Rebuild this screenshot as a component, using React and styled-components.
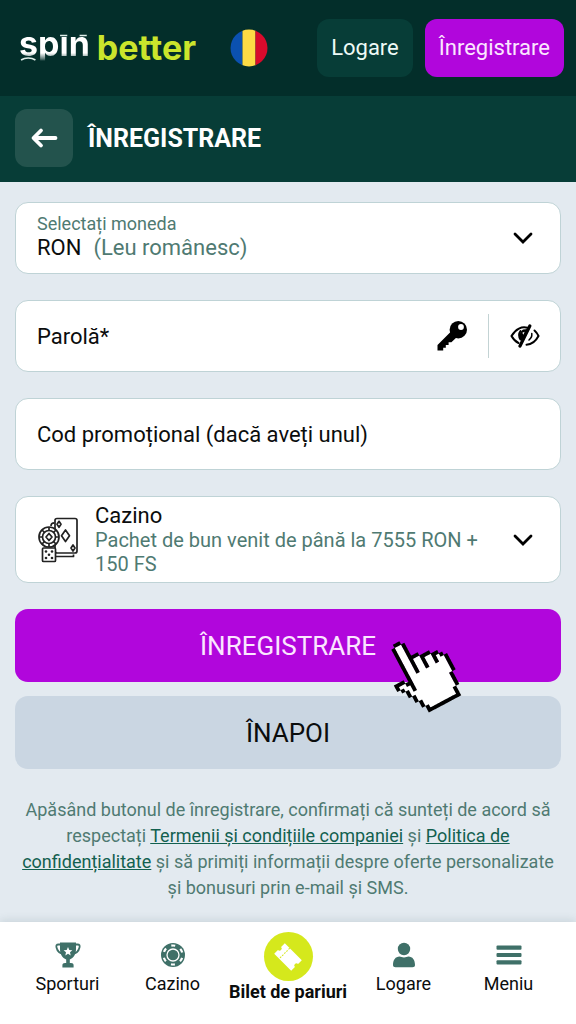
import React, { useState } from "react";
import styled, { createGlobalStyle } from "styled-components";

const GlobalStyle = createGlobalStyle`
  * {
    box-sizing: border-box;
  }
  body {
    margin: 0;
    background: #e3eaf0;
    font-family: Roboto, "Liberation Sans", sans-serif;
    color: #0b0d0d;
  }
  button,
  input,
  select {
    font-family: inherit;
  }
`;

const Page = styled.div`
  display: flex;
  flex-direction: column;
  min-height: 100vh;
`;

const Header = styled.header`
  display: flex;
  align-items: center;
  height: 96px;
  padding: 0 12px 1px 19px;
  background: #032e2a;
`;

const Logo = styled.a`
  display: flex;
  align-items: center;
  gap: 7px;
  font-family: Inter, sans-serif;
  font-size: 34px;
  font-weight: 700;
  line-height: 40px;
  text-decoration: none;
`;

const LogoSpin = styled.span`
  position: relative;
  padding-bottom: 8px;
  color: transparent;
  background: linear-gradient(
    #fff 0 29px,
    rgba(255, 255, 255, 0.35) 35px,
    transparent 37px
  );
  background-clip: text;
`;

const LogoSlices = styled.svg`
  position: absolute;
  top: 0;
  left: 0;
  width: 100%;
  height: 40px;
`;

const LogoBetter = styled.span`
  color: #cbe52c;
`;

const LanguageButton = styled.button`
  display: flex;
  margin-left: 34px;
  padding: 0;
  border: 0;
  background: none;
`;

const HeaderActions = styled.div`
  display: flex;
  gap: 12px;
  margin-left: auto;
`;

const HeaderButton = styled.button`
  height: 58px;
  padding: 0 14px;
  border: 0;
  border-radius: 12px;
  background: ${(props) => (props.$accent ? "#b106dc" : "#073d37")};
  color: ${(props) => (props.$accent ? "#fbe6ff" : "#eefaf6")};
  font-size: 22px;
`;

const TitleBar = styled.div`
  display: flex;
  align-items: center;
  gap: 15px;
  height: 86px;
  padding: 0 15px 2px;
  background: #073d37;
`;

const BackButton = styled.button`
  display: flex;
  align-items: center;
  justify-content: center;
  width: 58px;
  height: 58px;
  padding: 0;
  border: 0;
  border-radius: 12px;
  background: #23534d;
`;

const Title = styled.h1`
  margin: 0;
  color: #fff;
  font-size: 25px;
  font-weight: 700;
`;

const Form = styled.form`
  display: flex;
  flex-direction: column;
  gap: 26px;
  padding: 20px 15px 0;
`;

const Field = styled.div`
  position: relative;
  display: flex;
  align-items: center;
  min-height: 72px;
  padding: 0 20px 0 21px;
  border: 1px solid #bfd3d6;
  border-radius: 13px;
  background: #fff;
`;

const BonusField = styled(Field)`
  min-height: 87px;
  gap: 16px;
`;

const FieldBody = styled.div`
  display: flex;
  flex: 1;
  flex-direction: column;
`;

const FieldLabel = styled.label`
  color: #4f7a72;
  font-size: 18px;
  line-height: 24px;
`;

const FieldValue = styled.span`
  color: #0b0d0d;
  font-size: 22px;
  line-height: 24px;
`;

const CurrencyName = styled(FieldValue)`
  color: #4f7a72;
`;

const BonusText = styled.span`
  color: #4f7a72;
  font-size: 20px;
  line-height: 24px;
`;

const CurrencyValue = styled.div`
  display: flex;
  gap: 12px;
  padding-bottom: 5px;
`;

// the native control covers the whole card, the card shows its value
const NativeSelect = styled.select`
  position: absolute;
  inset: 0;
  width: 100%;
  height: 100%;
  opacity: 0;
  font-size: 22px;
`;

const TextInput = styled.input`
  flex: 1;
  min-width: 0;
  height: 70px;
  padding: 0;
  border: 0;
  outline: 0;
  background: none;
  color: #0b0d0d;
  font-size: 22px;

  &::placeholder {
    color: #0b0d0d;
    opacity: 1;
  }
`;

const IconButton = styled.button`
  display: flex;
  padding: 0;
  border: 0;
  background: none;
  color: #000;
`;

const Divider = styled.span`
  width: 1px;
  height: 44px;
  margin: 0 21px;
  background: #c3d3d4;
`;

const ChevronWrap = styled.span`
  display: flex;
  margin-right: 6px;
`;

const Actions = styled.div`
  display: flex;
  flex-direction: column;
  gap: 14px;
`;

const SubmitButton = styled.button`
  position: relative;
  z-index: ${(props) => (props.$primary ? 1 : 0)};
  height: 73px;
  border: 0;
  border-radius: 13px;
  background: ${(props) => (props.$primary ? "#b106dc" : "#cad6e2")};
  color: ${(props) => (props.$primary ? "#fbe6ff" : "#0b0d0d")};
  font-size: 26px;
`;

const Hand = styled.svg`
  position: absolute;
  top: 32px;
  left: calc(50% + 102px);
  width: 76px;
  height: 80px;
`;

const Terms = styled.p`
  margin: 28px 15px 21px;
  color: #4f7a72;
  font-size: 18px;
  line-height: 26px;
  text-align: center;

  a {
    color: #12604f;
  }
`;

const BottomNav = styled.nav`
  display: flex;
  justify-content: space-between;
  flex: 1;
  padding: 10px 15px 0;
  background: #fff;
  box-shadow: 0 -2px 8px rgba(60, 90, 100, 0.14);
`;

const NavItem = styled.a`
  display: flex;
  flex: ${(props) => (props.$active ? "0 0 126px" : "1")};
  flex-direction: column;
  align-items: center;
  gap: ${(props) => (props.$active ? "0" : "5px")};
  padding-top: ${(props) => (props.$active ? "0" : "10px")};
  color: #0b0d0d;
  font-size: 18px;
  font-weight: ${(props) => (props.$active ? 700 : 400)};
  line-height: 22px;
  text-decoration: none;
  white-space: nowrap;
`;

const TicketBadge = styled.span`
  display: flex;
  align-items: center;
  justify-content: center;
  width: 49px;
  height: 49px;
  border-radius: 50%;
  background: #d5e81c;
`;

const Flag = () => (
  <svg width="38" height="38" viewBox="0 0 38 38" aria-hidden="true">
    <clipPath id="flag">
      <circle cx="19" cy="19" r="18.5" />
    </clipPath>
    <g clipPath="url(#flag)">
      <rect width="12.5" height="38" fill="#0b51b0" />
      <rect x="12.5" width="13" height="38" fill="#fddb45" />
      <rect x="25.5" width="12.5" height="38" fill="#d90a2c" />
    </g>
  </svg>
);

const ArrowLeft = () => (
  <svg width="28" height="22" viewBox="0 0 28 22" aria-hidden="true">
    <path
      d="M11 3.5 3.5 11l7.500 7.500M4 11h21.500"
      fill="none"
      stroke="#fff"
      strokeWidth="3.8"
      strokeLinecap="round"
      strokeLinejoin="round"
    />
  </svg>
);

const Chevron = () => (
  <ChevronWrap>
    <svg width="22" height="14" viewBox="0 0 22 14" aria-hidden="true">
      <path
        d="M3 3l8 8 8-8"
        fill="none"
        stroke="#000"
        strokeWidth="2.800"
        strokeLinecap="round"
      />
    </svg>
  </ChevronWrap>
);

const KeyIcon = () => (
  <svg width="30" height="30" viewBox="0 0 30 30" aria-hidden="true">
    <circle cx="21.300" cy="8.700" r="8.700" />
    <path d="M14 10.500.5 24v5.500h5.700v-2.800h2.600V24h2.800v-2.700h2.800l5.600-5.300z" />
    <circle cx="24" cy="6" r="2.900" fill="#fff" />
  </svg>
);

const EyeOff = () => (
  <svg width="30" height="24" viewBox="0 0 30 24" aria-hidden="true">
    <g fill="none" stroke="#000" strokeWidth="2" strokeLinecap="round">
      <path d="M17.500 3.800C12 2 5.500 4.800 1.500 12c2 3.600 4.500 5.800 7 7" />
      <path d="M24.500 6.500c1.700 1.500 3 3.300 4 5.500-3 5.700-7.300 8.500-12 8.800" />
      <path d="M10.500 7c-1.800 2.500-1.600 5.800 0 8.500" />
      <path d="M21.800 9.500c.3 2.500-1 5-2.800 6.500" strokeWidth="1.500" />
    </g>
    <path d="M13 5.500 18 5l-6.500 11.500C8.500 13 9 8.500 13 5.500z" />
    <path d="M19.800 2 10 22" stroke="#000" strokeWidth="3.200" strokeLinecap="round" />
    <path d="m12.300 8.700 2.300-1-1.200 3z" fill="#fff" />
  </svg>
);

const CasinoIcon = () => (
  <svg width="42" height="46" viewBox="0 0 42 46" aria-hidden="true">
    <g fill="none" stroke="#222" strokeWidth="1.700" strokeLinejoin="round">
      <path d="M14 9c0-2 1-3.200 3.500-3.200M19 39.500h17.500v-2" />
      <rect x="18" y="1.500" width="22" height="34.500" rx="2" />
      <path d="m22 4.300 2 3-2 3-2-3zM36 28l2 3-2 3-2-3zM28.500 13l4 5.800-4 5.800-4-5.800z" />
      <circle cx="12" cy="20" r="10" fill="#fff" />
      <circle cx="12" cy="20" r="6.500" />
      <path d="m12 16.500 3 3.500-3 3.500L9 20z" />
      <path d="M12 10v3.500M12 26.500V30M2 20h3.500M18.500 20H22M5 13l2.400 2.400M16.600 24.600 19 27M19 13l-2.400 2.400M7.400 24.600 5 27" />
      <rect x="5.500" y="31" width="13" height="13.500" rx="1" fill="#fff" />
    </g>
    <g fill="#222">
      <circle cx="9" cy="34.500" r="1.300" />
      <circle cx="15" cy="34.500" r="1.300" />
      <circle cx="12" cy="37.700" r="1.300" />
      <circle cx="9" cy="41" r="1.300" />
      <circle cx="15" cy="41" r="1.300" />
    </g>
  </svg>
);

const TrophyIcon = () => (
  <svg width="26" height="26" viewBox="0 0 26 26" aria-hidden="true">
    <path
      d="M7 2.500H3.500c-2 0-2.500 1-2 3 .8 3.500 3 5.800 7 6.300M19 2.500h3.500c2 0 2.500 1 2 3-.8 3.500-3 5.800-7 6.300"
      fill="none"
      stroke="#3f7068"
      strokeWidth="1.800"
      strokeLinejoin="round"
    />
    <path
      d="M5 .5h16v6.500c0 5.500-2.500 9-6.200 10.500V21H16c1.600 0 2.600.8 2.600 2.200v2.300H7.400v-2.300C7.400 21.800 8.400 21 10 21h1.200v-3.500C7.500 16 5 12.500 5 7z"
      fill="#3f7068"
    />
    <path
      d="m13 5 1.300 2.900 3.100.3-2.400 2.100.7 3.100-2.700-1.600-2.700 1.600.7-3.100-2.400-2.100 3.100-.3z"
      fill="#fff"
    />
  </svg>
);

const ChipIcon = () => (
  <svg width="26" height="26" viewBox="0 0 26 26" aria-hidden="true">
    <circle cx="13" cy="13" r="12" fill="#3f7068" />
    <circle
      cx="13"
      cy="13"
      r="9.500"
      fill="none"
      stroke="#fff"
      strokeWidth="2.200"
      strokeDasharray="4 5.948"
      strokeDashoffset="7"
    />
    <circle cx="13" cy="13" r="6" fill="none" stroke="#fff" strokeWidth="1.300" />
  </svg>
);

const UserIcon = () => (
  <svg width="26" height="26" viewBox="0 0 26 26" fill="#3f7068" aria-hidden="true">
    <circle cx="13" cy="7" r="6.200" />
    <path d="M2 23c0-5 2.500-8.500 6.500-8.500 1.500 0 2.500.9 4.500.9s3-.9 4.500-.9c4 0 6.500 3.500 6.500 8.500 0 1.600-1 2.200-2.500 2.200h-17C3 25.200 2 24.600 2 23z" />
  </svg>
);

const MenuIcon = () => (
  <svg width="26" height="26" viewBox="0 0 26 26" fill="#3f7068" aria-hidden="true">
    <rect x=".5" y="3.500" width="25" height="4.200" rx="1" />
    <rect x=".5" y="10.900" width="25" height="4.200" rx="1" />
    <rect x=".5" y="18.300" width="25" height="4.200" rx="1" />
  </svg>
);

const TicketIcon = () => (
  <svg width="32" height="32" viewBox="0 0 32 32" aria-hidden="true">
    <g transform="rotate(45 16 16)">
      <path
        d="M4 8.500h24v5.300a2.200 2.200 0 0 0 0 4.400v5.300H4v-5.300a2.200 2.200 0 0 0 0-4.400z"
        fill="#fff"
      />
      <path d="M11 8.500v15" stroke="#d5e81c" strokeWidth="1" strokeDasharray="1.800 1.200" />
    </g>
  </svg>
);

const HAND_ROWS = [
  ".....XX..........",
  "....XooX.........",
  "....XooX.........",
  "....XooX.........",
  "....XooX.........",
  "....XooXXX.......",
  "....XooXooXXX....",
  "....XooXooXooXX..",
  "....XooXooXooXoX.",
  "....XooXooXooXooX",
  "XXX.XoooooooooooX",
  "XooXXoooooooooooX",
  ".XooXoooooooooooX",
  "..XoXoooooooooooX",
  "..XooooooooooooX.",
  "...XoooooooooooX.",
  "...XoooooooooooX.",
  "....XooooooooooX.",
  "....XoooooooooX..",
  ".....XooooooooX..",
  ".....XXXXXXXXXX..",
];

const cells = (test) =>
  HAND_ROWS.flatMap((row, y) =>
    [...row].map((c, x) => (test(c) ? `M${x} ${y}h1.050v1.050h-1.050z` : ""))
  ).join("");

const HandCursor = () => (
  <Hand viewBox="0 0 76 80" aria-hidden="true">
    <g transform="translate(6 2) rotate(-28) scale(3.650) translate(-6 0)">
      <path d={cells((c) => c === "o")} fill="#fff" stroke="#fff" strokeWidth=".1" />
      <path d={cells((c) => c === "X")} fill="#000" />
    </g>
  </Hand>
);

const currencies = [
  { code: "RON", name: "(Leu românesc)" },
  { code: "EUR", name: "(Euro)" },
];

const bonuses = [
  {
    title: "Cazino",
    text: "Pachet de bun venit de până la 7555 RON + 150 FS",
  },
];

const navItems = [
  { label: "Sporturi", icon: <TrophyIcon /> },
  { label: "Cazino", icon: <ChipIcon /> },
  {
    label: "Bilet de pariuri",
    active: true,
    icon: (
      <TicketBadge>
        <TicketIcon />
      </TicketBadge>
    ),
  },
  { label: "Logare", icon: <UserIcon /> },
  { label: "Meniu", icon: <MenuIcon /> },
];

const App = () => {
  const [currency, setCurrency] = useState(0);
  const [bonus, setBonus] = useState(0);
  const [showPassword, setShowPassword] = useState(false);

  return (
    <Page>
      <GlobalStyle />
      <Header>
        <Logo href="#">
          <LogoSpin>
            spin
            <LogoSlices
              viewBox="0 0 69 40"
              preserveAspectRatio="none"
              aria-hidden="true"
            >
              <path d="M38 3h11v9.500H38z" fill="#032e2a" />
              <path d="M40 11.500h7M59 11.500h7" stroke="#dfeeea" strokeWidth="1.300" />
              <path
                d="M2 36c4-2.600 10-2.600 14 0"
                fill="none"
                stroke="#dfeeea"
                strokeWidth="1.500"
              />
            </LogoSlices>
          </LogoSpin>
          <LogoBetter>better</LogoBetter>
        </Logo>
        <LanguageButton type="button" aria-label="Română">
          <Flag />
        </LanguageButton>
        <HeaderActions>
          <HeaderButton type="button">Logare</HeaderButton>
          <HeaderButton type="button" $accent>
            Înregistrare
          </HeaderButton>
        </HeaderActions>
      </Header>
      <TitleBar>
        <BackButton type="button" aria-label="Înapoi">
          <ArrowLeft />
        </BackButton>
        <Title>ÎNREGISTRARE</Title>
      </TitleBar>
      <Form onSubmit={(e) => e.preventDefault()}>
        <Field>
          <FieldBody>
            <FieldLabel htmlFor="currency">Selectați moneda</FieldLabel>
            <CurrencyValue>
              <FieldValue>{currencies[currency].code}</FieldValue>
              <CurrencyName>{currencies[currency].name}</CurrencyName>
            </CurrencyValue>
          </FieldBody>
          <Chevron />
          <NativeSelect
            id="currency"
            value={currency}
            onChange={(e) => setCurrency(Number(e.target.value))}
          >
            {currencies.map((c, i) => (
              <option key={c.code} value={i}>
                {c.code} {c.name}
              </option>
            ))}
          </NativeSelect>
        </Field>
        <Field>
          <TextInput
            type={showPassword ? "text" : "password"}
            placeholder="Parolă*"
            aria-label="Parolă"
          />
          <IconButton type="button" aria-label="Generează parola">
            <KeyIcon />
          </IconButton>
          <Divider />
          <IconButton
            type="button"
            aria-label="Arată parola"
            onClick={() => setShowPassword(!showPassword)}
          >
            <EyeOff />
          </IconButton>
        </Field>
        <Field>
          <TextInput
            type="text"
            placeholder="Cod promoțional (dacă aveți unul)"
            aria-label="Cod promoțional"
          />
        </Field>
        <BonusField>
          <CasinoIcon />
          <FieldBody>
            <FieldValue as="label" htmlFor="bonus">
              {bonuses[bonus].title}
            </FieldValue>
            <BonusText>{bonuses[bonus].text}</BonusText>
          </FieldBody>
          <Chevron />
          <NativeSelect
            id="bonus"
            value={bonus}
            onChange={(e) => setBonus(Number(e.target.value))}
          >
            {bonuses.map((b, i) => (
              <option key={b.title} value={i}>
                {b.title}
              </option>
            ))}
          </NativeSelect>
        </BonusField>
        <Actions>
          <SubmitButton type="submit" $primary>
            ÎNREGISTRARE
            <HandCursor />
          </SubmitButton>
          <SubmitButton type="button">ÎNAPOI</SubmitButton>
        </Actions>
      </Form>
      <Terms>
        Apăsând butonul de înregistrare, confirmați că sunteți de acord să
        respectați <a href="#terms">Termenii și condițiile companiei</a> și{" "}
        <a href="#privacy">Politica de confidențialitate</a> și să primiți
        informații despre oferte personalizate și bonusuri prin e-mail și SMS.
      </Terms>
      <BottomNav>
        {navItems.map((item) => (
          <NavItem key={item.label} href="#" $active={item.active}>
            {item.icon}
            {item.label}
          </NavItem>
        ))}
      </BottomNav>
    </Page>
  );
};

export default App;
